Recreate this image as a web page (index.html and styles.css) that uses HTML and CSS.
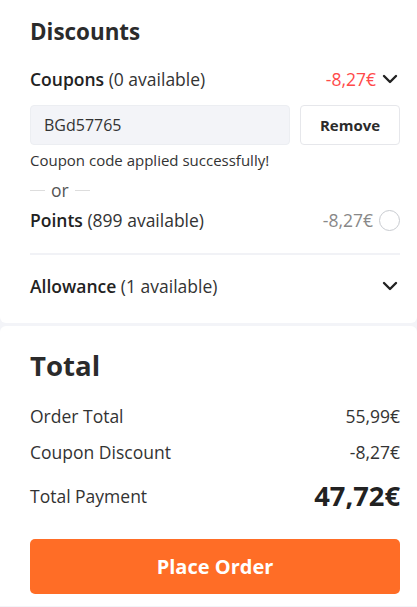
FILE: index.html
```html
<!DOCTYPE html>
<html lang="en">
<head>
<meta charset="utf-8">
<title>Checkout</title>
<link rel="stylesheet" href="styles.css">
</head>
<body>
<section class="card discounts">
  <h2 class="title">Discounts</h2>
  <div class="row coupons">
    <span class="label"><b>Coupons</b> (0 available)</span>
    <span class="right">
      <span class="amount red">-8,27€</span>
      <svg class="chev" width="16" height="10" viewBox="0 0 16 10"><path d="M2 2 L8 8 L14 2" fill="none" stroke="#222" stroke-width="2.4" stroke-linecap="round" stroke-linejoin="round"/></svg>
    </span>
  </div>
  <div class="coupon-form">
    <div class="code-input">BGd57765</div>
    <button class="remove">Remove</button>
  </div>
  <p class="success">Coupon code applied successfully!</p>
  <div class="or"><span class="dash"></span><span>or</span><span class="dash"></span></div>
  <div class="row points">
    <span class="label"><b>Points</b> (899 available)</span>
    <span class="right">
      <span class="amount grey">-8,27€</span>
      <span class="radio"></span>
    </span>
  </div>
  <div class="divider"></div>
  <div class="row allowance">
    <span class="label"><b>Allowance</b> (1 available)</span>
    <svg class="chev" width="16" height="10" viewBox="0 0 16 10"><path d="M2 2 L8 8 L14 2" fill="none" stroke="#222" stroke-width="2.4" stroke-linecap="round" stroke-linejoin="round"/></svg>
  </div>
</section>
<section class="card total">
  <h2 class="title big">Total</h2>
  <div class="row line first"><span>Order Total</span><span>55,99€</span></div>
  <div class="row line"><span>Coupon Discount</span><span>-8,27€</span></div>
  <div class="row pay"><span>Total Payment</span><span class="pay-amount">47,72€</span></div>
  <button class="place">Place Order</button>
</section>
</body>
</html>
```
FILE: styles.css
```css
* { box-sizing: border-box; }
html, body { margin: 0; padding: 0; }
body {
  background: #f3f4f8;
  font-family: "Open Sans", "Noto Sans", Arial, sans-serif;
  color: #333;
  width: 417px;
}
.card {
  background: #fff;
  padding: 0 17px 0 30px;
  border-radius: 0 0 6px 6px;
}
.total { border-radius: 6px 6px 0 0; margin-top: 3px; padding-top: 20px; padding-bottom: 12px; }
.discounts { padding-top: 16px; padding-bottom: 25px; }
.title {
  margin: 0;
  font-size: 22.4px;
  line-height: 32px;
  font-weight: 700;
  color: #2b2b2b;
}
.title.big { font-size: 27.6px; line-height: 38px; }
.row {
  display: flex;
  justify-content: space-between;
  align-items: center;
  font-size: 17.5px;
  line-height: 24px;
}
.label b { font-weight: 600; color: #222; }
.label { color: #333; }
.right { display: flex; align-items: center; gap: 6px; }
.amount.red { color: #ff4a4a; }
.amount.grey { color: #888; }
.chev { display: block; margin-right: 2px; }
.coupons { margin-top: 19px; }
.coupon-form { display: flex; gap: 10px; margin-top: 14px; }
.code-input {
  flex: 1;
  height: 40px;
  background: #f3f4f8;
  border: 1px solid #eceef2;
  border-radius: 4px;
  padding: 0 13px;
  font-size: 16px;
  line-height: 38px;
  color: #333;
}
.remove {
  width: 100px;
  height: 40px;
  background: #fff;
  border: 1px solid #e6e7eb;
  border-radius: 4px;
  font-family: inherit;
  font-size: 15px;
  font-weight: 700;
  color: #2b2b2b;
  padding: 0;
}
.success {
  margin: 5px 0 0;
  font-size: 15px;
  line-height: 20px;
  color: #333;
}
.or {
  display: flex;
  align-items: center;
  gap: 6px;
  margin-top: 9px;
  font-size: 17.5px;
  line-height: 22px;
  color: #555;
}
.dash { width: 15px; height: 1px; background: #ddd; }
.points { margin-top: 7px; }
.radio {
  width: 21px; height: 21px;
  border: 1px solid #c8cbd0;
  border-radius: 50%;
  display: block;
}
.divider { height: 2px; background: #f1f2f6; margin-top: 21px; }
.allowance { margin-top: 19px; }
.line { color: #333; }
.line.first { margin-top: 20px; }
.line + .line { margin-top: 12px; }
.pay { margin-top: 14px; line-height: 36px; }
.pay-amount { font-size: 27.3px; font-weight: 700; color: #222; }
.place {
  display: block;
  width: 100%;
  height: 55px;
  margin-top: 25px;
  background: #ff6d26;
  border: none;
  border-radius: 5px;
  color: #fff;
  font-family: inherit;
  font-size: 20px;
  font-weight: 700;
}
```
